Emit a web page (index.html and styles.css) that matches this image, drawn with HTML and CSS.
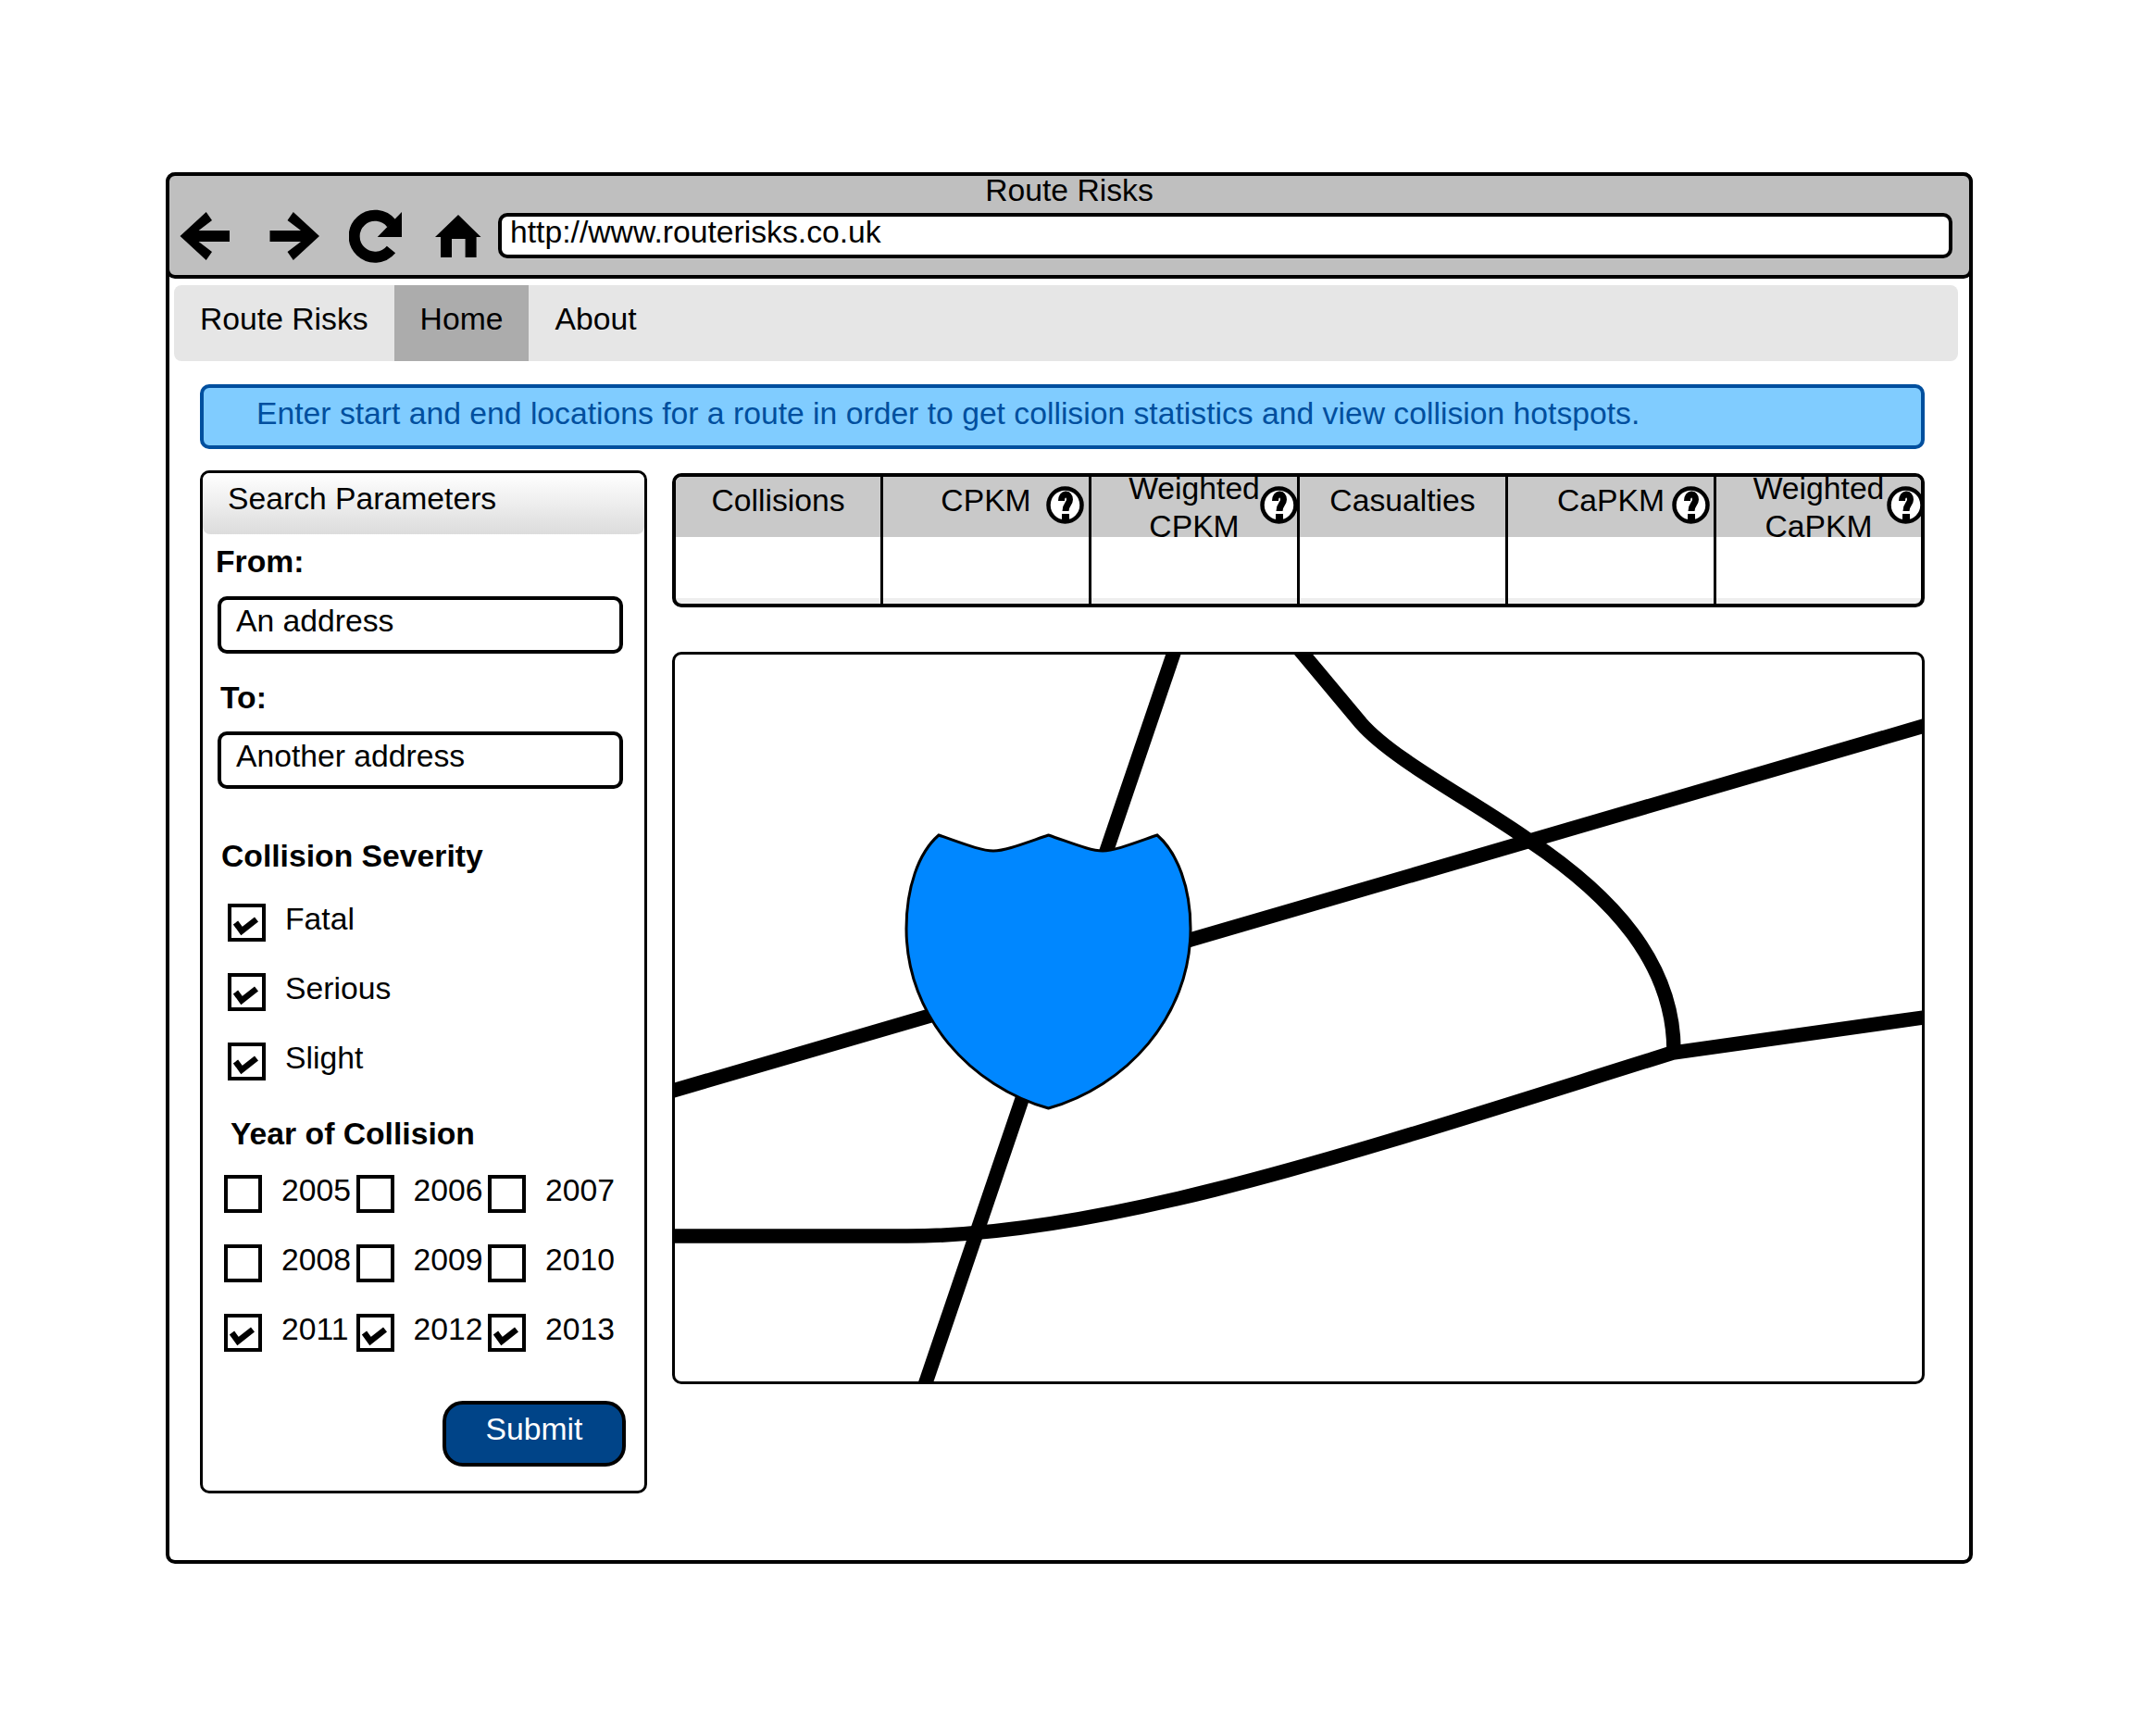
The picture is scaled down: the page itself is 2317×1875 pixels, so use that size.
FILE: index.html
```html
<!DOCTYPE html>
<html lang="en">
<head>
<meta charset="utf-8">
<title>Route Risks</title>
<link rel="stylesheet" href="styles.css">
</head>
<body>
<svg class="defs" width="0" height="0" aria-hidden="true">
  <symbol id="tick" viewBox="0 0 33 33"><path d="M4.500 16.500 L11 25.500 L27 13" fill="none" stroke="#000" stroke-width="6.500"/></symbol>
  <symbol id="help" viewBox="0 0 41 41">
    <circle cx="20.500" cy="20.500" r="18" fill="#fff" stroke="#000" stroke-width="4.500"/>
    <path d="M16.500 16 C16.500 7 25.500 7 25.500 14.500 C25.500 19.500 21 19.500 21 27" fill="none" stroke="#000" stroke-width="7"/>
    <rect x="17" y="30" width="8" height="9"/>
  </symbol>
</svg>
<div class="window">
  <header class="chrome">
    <div class="chrome-title">Route Risks</div>
    <div class="toolbar">
      <svg class="tool tool-back" viewBox="194 229 54 52"><path d="M194.500 255 L222.700 229 L229 238 L214.600 249 H248 V261 H214.600 L229 272 L222.700 281 Z"/></svg>
      <svg class="tool tool-forward" viewBox="291 229 54 52"><path d="M345 255 L316.800 229 L310.500 238 L325 249 H291.500 V261 H325 L310.500 272 L316.800 281 Z"/></svg>
      <svg class="tool tool-reload" viewBox="377 226 58 58"><path d="M422.500 269.500 A22.500 22.500 0 1 1 423 241.500" fill="none" stroke="#000" stroke-width="12"/><path d="M434 229 V256 H407.700 Z"/></svg>
      <svg class="tool tool-home" viewBox="470 232 50 46"><path d="M495 232 L519.500 256 H514.600 V278 H502.600 V258 H488 V278 H476 V256 H470 Z"/></svg>
      <div class="url">http://www.routerisks.co.uk</div>
    </div>
  </header>
  <nav class="nav">
    <span class="nav-item">Route Risks</span>
    <span class="nav-item nav-item-active">Home</span>
    <span class="nav-item">About</span>
  </nav>
  <main class="content">
    <div class="alert">Enter start and end locations for a route in order to get collision statistics and view collision hotspots.</div>
    <div class="columns">
      <section class="panel">
        <h2 class="panel-head">Search Parameters</h2>
        <div class="field-label label-from">From:</div>
        <div class="input input-from">An address</div>
        <div class="field-label label-to">To:</div>
        <div class="input input-to">Another address</div>
        <div class="field-label label-severity">Collision Severity</div>
        <div class="severity">
          <div class="check-row"><span class="box"><svg class="tick"><use href="#tick"/></svg></span><span class="check-text">Fatal</span></div>
          <div class="check-row"><span class="box"><svg class="tick"><use href="#tick"/></svg></span><span class="check-text">Serious</span></div>
          <div class="check-row"><span class="box"><svg class="tick"><use href="#tick"/></svg></span><span class="check-text">Slight</span></div>
        </div>
        <div class="field-label label-year">Year of Collision</div>
        <div class="years">
          <div class="check-row"><span class="box"></span><span class="check-text">2005</span></div>
          <div class="check-row"><span class="box"></span><span class="check-text">2006</span></div>
          <div class="check-row"><span class="box"></span><span class="check-text">2007</span></div>
          <div class="check-row"><span class="box"></span><span class="check-text">2008</span></div>
          <div class="check-row"><span class="box"></span><span class="check-text">2009</span></div>
          <div class="check-row"><span class="box"></span><span class="check-text">2010</span></div>
          <div class="check-row"><span class="box"><svg class="tick"><use href="#tick"/></svg></span><span class="check-text">2011</span></div>
          <div class="check-row"><span class="box"><svg class="tick"><use href="#tick"/></svg></span><span class="check-text">2012</span></div>
          <div class="check-row"><span class="box"><svg class="tick"><use href="#tick"/></svg></span><span class="check-text">2013</span></div>
        </div>
        <div class="submit-row"><div class="submit">Submit</div></div>
      </section>
      <div class="results">
        <div class="stats">
          <div class="stat"><div class="stat-head">Collisions</div></div>
          <div class="stat"><div class="stat-head">CPKM<svg class="help help-cpkm"><use href="#help"/></svg></div></div>
          <div class="stat"><div class="stat-head"><div class="stat-double">Weighted<br>CPKM</div><svg class="help help-wcpkm"><use href="#help"/></svg></div></div>
          <div class="stat"><div class="stat-head">Casualties</div></div>
          <div class="stat"><div class="stat-head">CaPKM<svg class="help help-capkm"><use href="#help"/></svg></div></div>
          <div class="stat"><div class="stat-head"><div class="stat-double">Weighted<br>CaPKM</div><svg class="help help-wcapkm"><use href="#help"/></svg></div></div>
        </div>
        <div class="map">
          <svg class="map-art" viewBox="729 708 1347 785">
            <g fill="none" stroke="#000" stroke-width="15.500">
              <path d="M1270 700 L998 1500"/>
              <path d="M720 1181 L2085 783"/>
              <path d="M720 1336 H980 C1200 1336 1480 1240 1807 1138 L2085 1099"/>
              <path d="M1404 703 L1470 782 C1505 822 1590 865 1652 909 C1740 968 1808 1040 1808 1136"/>
            </g>
            <path d="M1014 903 C1040 912 1060 920 1073 920 C1086 920 1106 912 1132.500 903 C1159 912 1178 920 1191 920 C1204 920 1224 912 1250 903 C1272 922 1286 960 1286 1004 C1286 1100 1215 1175 1132.500 1198 C1050 1175 979 1100 979 1004 C979 960 992 922 1014 903 Z" fill="#0087ff" stroke="#000" stroke-width="3"/>
          </svg>
        </div>
      </div>
    </div>
  </main>
</div>
</body>
</html>
```
FILE: styles.css
```css
* { box-sizing: border-box; }
html, body { margin: 0; padding: 0; background: #fff; }
body {
  font-family: "Liberation Sans", Arial, sans-serif;
  font-size: 33.700px;
  line-height: 40px;
  color: #000;
}
.defs { position: absolute; }
.window {
  width: 1952px;
  height: 1503px;
  margin: 186px 0 0 179px;
  border: 4px solid #000;
  border-top: 0;
  border-radius: 10px;
  background: #fff;
}
.chrome {
  height: 115px;
  margin: 0 -4px;
  background: #bfbfbf;
  border: 4px solid #000;
  border-radius: 10px;
}
.chrome-title { text-align: center; height: 40px; margin-top: -5px; }
.toolbar { display: flex; align-items: flex-start; padding-left: 11px; }
.tool { display: block; flex: none; }
.tool-back { width: 54px; height: 52px; margin-top: 4px; }
.tool-forward { width: 54px; height: 52px; margin-top: 4px; margin-left: 43px; }
.tool-reload { width: 58px; height: 58px; margin-top: 1px; margin-left: 32px; }
.tool-home { width: 50px; height: 46px; margin-top: 7px; margin-left: 35px; }
.url {
  margin-left: 18px;
  width: 1571px;
  height: 49px;
  margin-top: 5px;
  border: 4px solid #000;
  border-radius: 10px;
  background: #fff;
  padding-left: 9px;
  line-height: 32px;
}
.nav {
  display: flex;
  height: 82px;
  margin: 7px 12px 0 5px;
  background: #e6e6e6;
  border-radius: 8px;
  overflow: hidden;
}
.nav-item { padding: 16px 28px 0; }
.nav-item-active { background: #acacac; }
.content { padding: 25px 0 0 33px; }
.alert {
  width: 1863px;
  height: 70px;
  border: 4px solid #004f9e;
  border-radius: 10px;
  background: #80ccff;
  color: #004f9e;
  padding: 7px 0 0 57px;
}
.columns { display: flex; align-items: flex-start; gap: 27px; margin-top: 23px; }
.panel {
  width: 483px;
  height: 1105px;
  flex: none;
  border: 3px solid #000;
  border-radius: 10px;
  background: #fff;
}
.panel-head {
  margin: 0;
  height: 66px;
  padding: 7px 0 0 27px;
  font-size: 33.700px;
  font-weight: 400;
  line-height: 40px;
  border-radius: 8px;
  background: linear-gradient(#fff, #dcdcdc);
}
.field-label { font-weight: 700; }
.label-from { margin: 9px 0 0 14px; }
.label-to { margin: 27px 0 0 19px; }
.label-severity { margin: 52px 0 0 20px; }
.label-year { margin: 37px 0 0 30px; }
.input {
  width: 438px;
  height: 62px;
  border: 4px solid #000;
  border-radius: 10px;
  padding: 2px 0 0 16px;
  background: #fff;
}
.input-from { margin: 18px 0 0 16px; }
.input-to { margin: 17px 0 0 16px; }
.severity { display: grid; row-gap: 34px; margin: 32px 0 0 27px; }
.years {
  display: grid;
  grid-template-columns: repeat(3, 142.500px);
  row-gap: 34px;
  margin: 25px 0 0 23px;
}
.check-row { display: flex; gap: 21px; height: 41px; }
.box {
  flex: none;
  display: block;
  width: 41px;
  height: 41px;
  border: 4px solid #000;
  background: #fff;
}
.tick { display: block; width: 33px; height: 33px; }
.check-text { margin-top: -4px; }
.submit-row { display: flex; justify-content: flex-end; margin: 53px 20px 0 0; }
.submit {
  width: 198px;
  height: 71px;
  border: 4px solid #000;
  border-radius: 22px;
  background: #004488;
  color: #fff;
  text-align: center;
  padding: 6px 0 0;
}
.results { width: 1353px; flex: none; padding-top: 3px; }
.stats {
  display: grid;
  grid-template-columns: 221px repeat(4, 225px) 1fr;
  height: 145px;
  border: 4px solid #000;
  border-radius: 10px;
  background: linear-gradient(#fff 131px, #eee 131px);
}
.stat { border-left: 3px solid #000; }
.stat:first-child { border-left: 0; }
.stat-head {
  position: relative;
  height: 65px;
  padding-top: 5px;
  background: #c9c9c9;
  text-align: center;
}
.stat:first-child .stat-head { border-radius: 6px 0 0 0; }
.stat:last-child .stat-head { border-radius: 0 6px 0 0; }
.stat-double { margin-top: -13px; line-height: 41px; }
.help { position: absolute; top: 10px; width: 41px; height: 41px; }
.help-cpkm { right: 5px; }
.help-wcpkm { right: -1px; }
.help-capkm { right: 4px; }
.help-wcapkm { right: -4px; }
.map {
  height: 791px;
  margin-top: 48px;
  border: 3px solid #000;
  border-radius: 10px;
  background: #fff;
  overflow: hidden;
}
.map-art { display: block; width: 100%; height: 100%; }
```
